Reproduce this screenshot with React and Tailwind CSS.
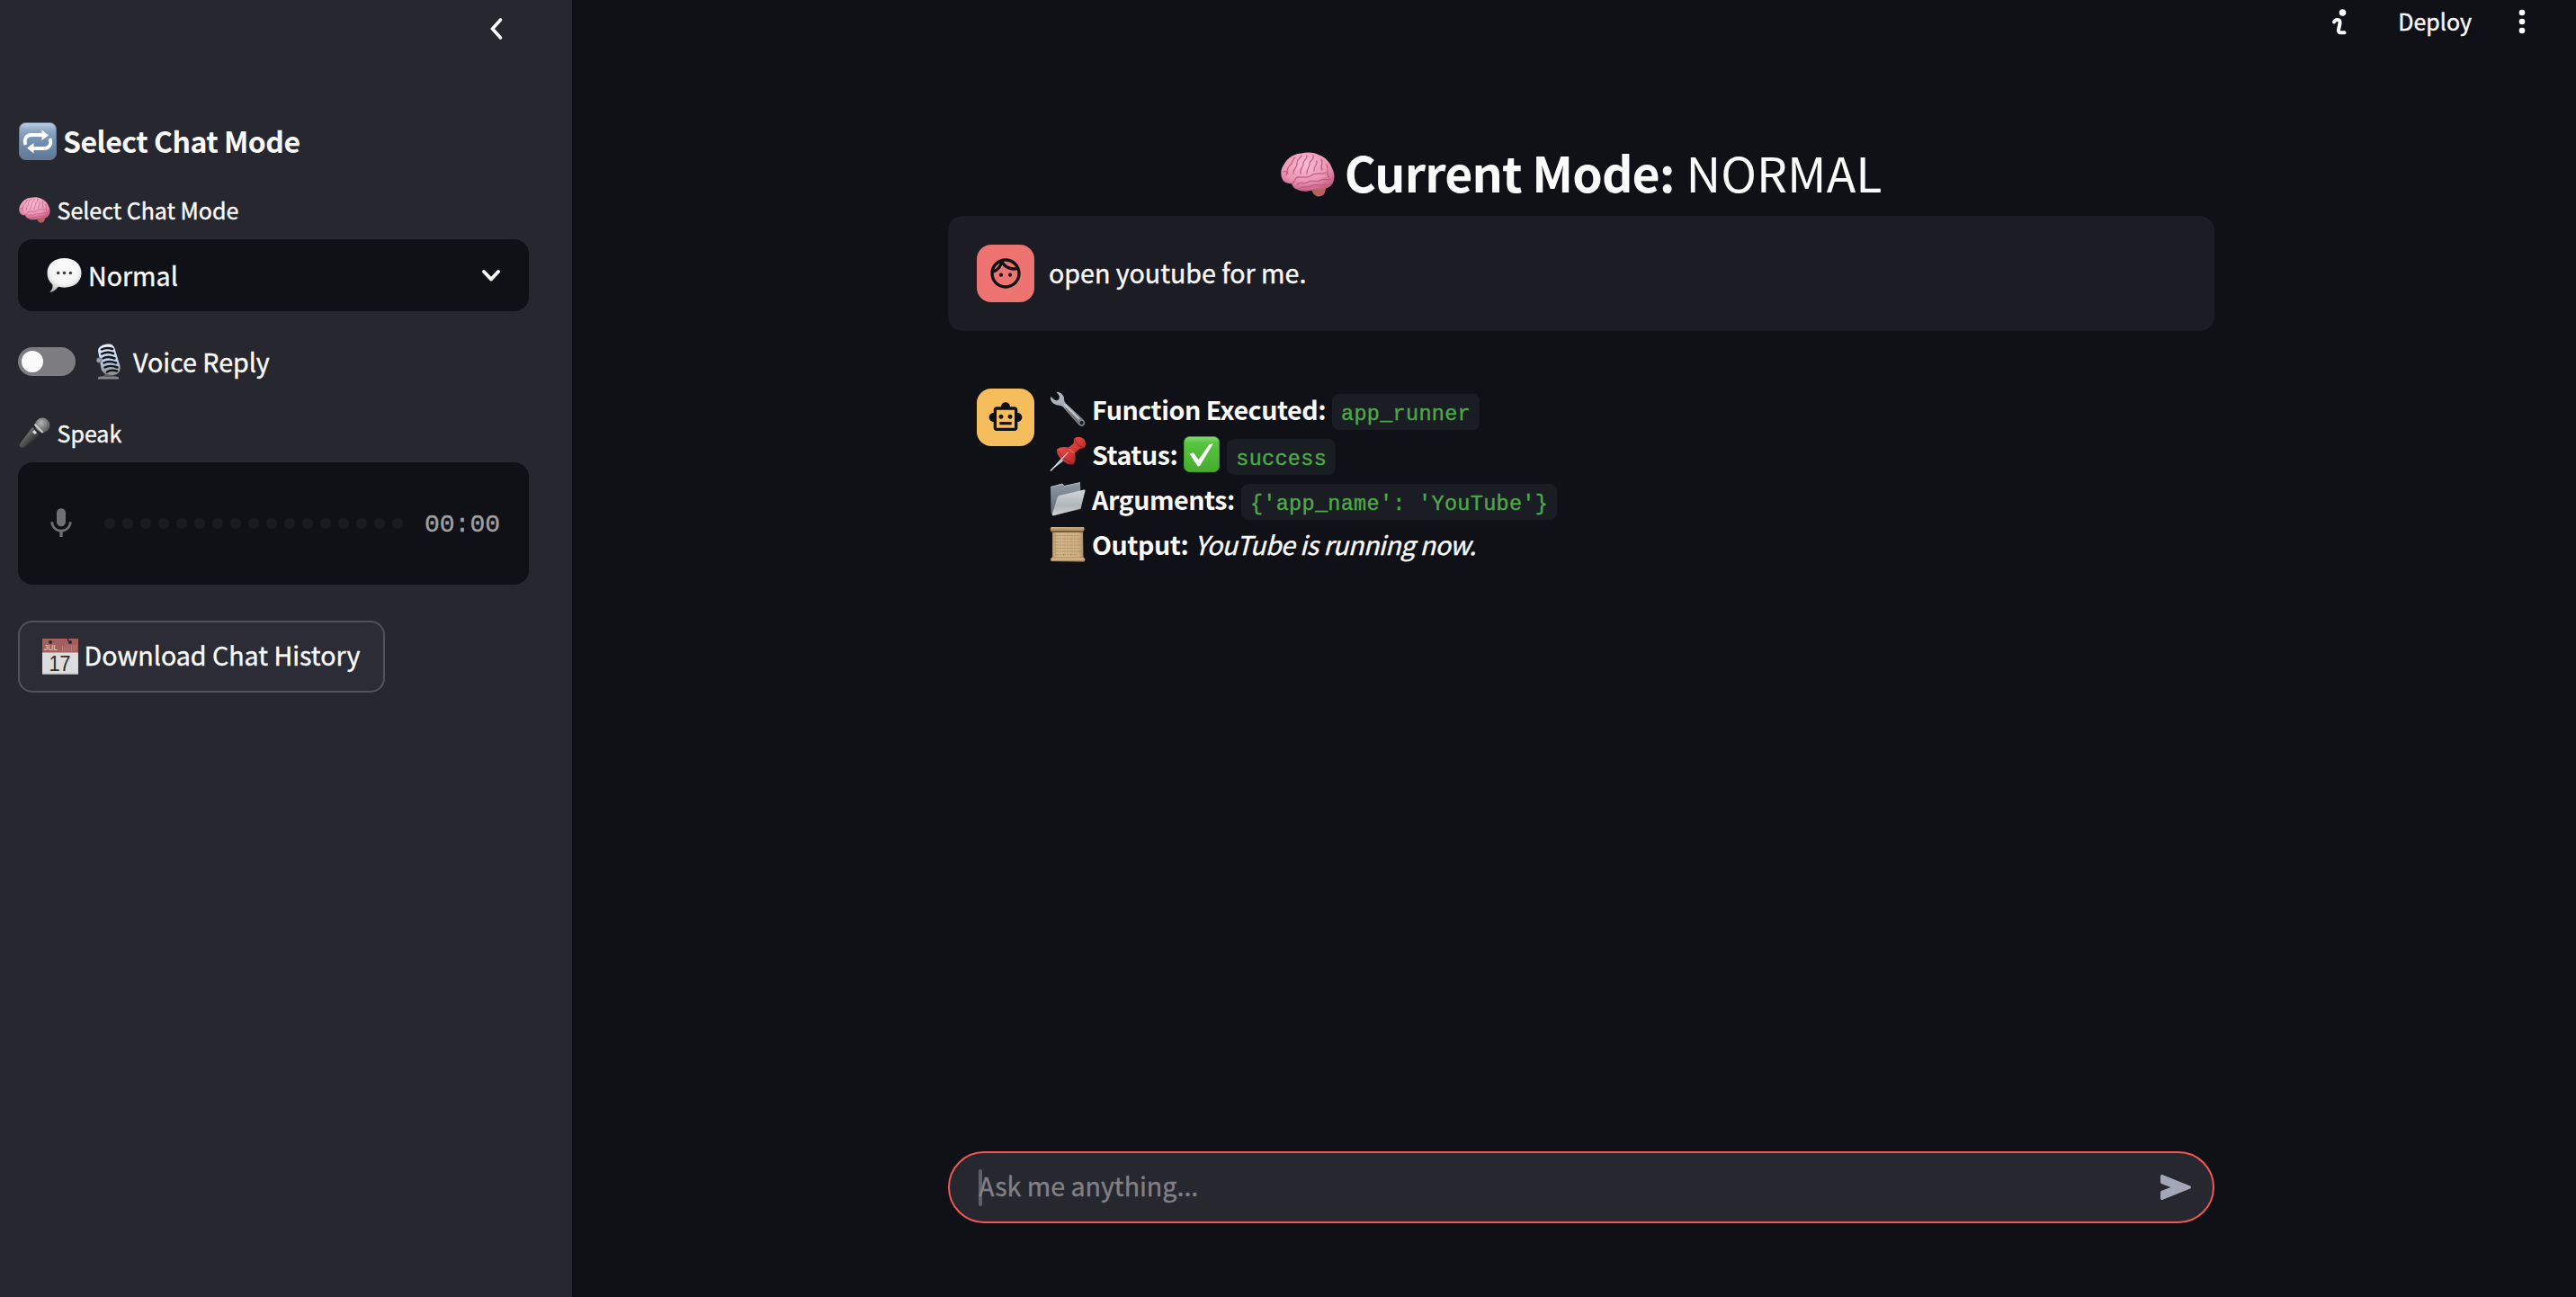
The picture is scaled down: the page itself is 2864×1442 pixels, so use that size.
import { MdOutlineFace, MdOutlineSmartToy, MdMic } from "react-icons/md";

const RepeatEmoji = ({ className }) => (
  <svg viewBox="0 0 42 42" className={className}>
    <defs>
      <linearGradient id="rep" x1="0" y1="0" x2="0" y2="1">
        <stop offset="0" stopColor="#c3d3e4" />
        <stop offset="0.2" stopColor="#8fa9c6" />
        <stop offset="0.5" stopColor="#7490b0" />
        <stop offset="1" stopColor="#5f7995" />
      </linearGradient>
    </defs>
    <rect x="0.5" y="0.5" width="41" height="41" rx="7" fill="url(#rep)" stroke="#62799a" />
    <g fill="none" stroke="#fff" strokeWidth="3.8">
      <path d="M7.500 25C5 18 9 14 14 14H27" />
      <path d="M34.500 18C37 25 33 29 28 29H15" />
    </g>
    <path d="M25.500 8.500L33 14.500L25.500 20Z M16.500 34.500L9 28.500L16.500 23Z" fill="#fff" />
  </svg>
);

const BrainEmoji = ({ className }) => (
  <svg viewBox="0 0 60 50" className={className}>
    <defs>
      <radialGradient id="brain" cx="0.45" cy="0.3" r="0.7">
        <stop offset="0" stopColor="#fbbdd2" />
        <stop offset="0.65" stopColor="#eb94b2" />
        <stop offset="1" stopColor="#c65f83" />
      </radialGradient>
    </defs>
    <path d="M33 39C35 46 38 49.500 42 49.500C47 49.500 50 46 50 39Z" fill="#b5605f" />
    <path
      d="M2 31C-1 25 0 18 4 13C8 6 15 2 23 1.500C30 -0.500 38 0.500 43 3.500C50 6 55 12 57 18C61 25 60 34 55 38C50 42 44 42 38 41C33 44 24 45 18 41.500C15 41 13 38 12 35C8 35.500 4 34 2 31Z"
      fill="url(#brain)"
    />
    <g fill="none" stroke="#b9557c" strokeWidth="1.300" strokeLinecap="round" opacity="0.85">
      <path d="M12 35C17 34 14 29 19 28C25 27 29 30 34 26C38 22 44 26 50 23" />
      <path d="M6 26C8 21 6 17 11 14C14 11 13 8 16 6" />
      <path d="M14 24C13 19 19 17 18 12C18 8 22 7 23 4" />
      <path d="M22 24C20 19 26 17 25 12C26 8 30 8 29 4" />
      <path d="M29 24C28 19 33 17 32 12C33 9 37 9 36 4" />
      <path d="M37 21C36 16 41 15 40 10M46 20C43 16 48 12 45 8" />
      <path d="M53 28C50 24 54 20 51 14" />
      <path d="M18 36C22 32 26 37 31 33C36 30 40 35 45 31C48 29 51 32 55 30" />
      <path d="M22 40C27 37 31 41 35 37C40 35 44 39 50 36" />
      <path d="M3 22C5 21 7 22 8 24" />
    </g>
  </svg>
);

const SpeechEmoji = ({ className }) => (
  <svg viewBox="0 0 40 40" className={className}>
    <defs>
      <radialGradient id="speech" cx="0.5" cy="0.35" r="0.65">
        <stop offset="0" stopColor="#ffffff" />
        <stop offset="0.65" stopColor="#f4f4f4" />
        <stop offset="1" stopColor="#bdbdbd" />
      </radialGradient>
    </defs>
    <path
      d="M20 0.500C31 0.500 39.500 7 39.500 17.500C39.500 28 31 34 20 34C17.500 34 15 33.800 13 33.200C11 36.500 7.500 38.800 4.500 39.300C3.800 39.400 3.800 38.800 4.300 38.300C6.200 36.300 7 33.500 6.500 30.500C2.500 27.500 0.500 23 0.500 17.500C0.500 7 9 0.500 20 0.500Z"
      fill="url(#speech)"
    />
    <g fill="#3c3c3c">
      <circle cx="13" cy="17.500" r="1.800" />
      <circle cx="20" cy="17.500" r="1.800" />
      <circle cx="27" cy="17.500" r="1.800" />
    </g>
  </svg>
);

const StudioMicEmoji = ({ className }) => (
  <svg viewBox="0 0 28 40" className={className}>
    <defs>
      <linearGradient id="studio" x1="0" y1="0" x2="0" y2="1">
        <stop offset="0" stopColor="#e8f0fb" />
        <stop offset="0.55" stopColor="#b9cdf0" />
        <stop offset="1" stopColor="#8f8c88" />
      </linearGradient>
    </defs>
    <path d="M2 37.500C6 35.500 20 35.500 25 37.500V39.500H2Z" fill="#85878b" />
    <path d="M10 32H19L20 37H8Z" fill="#55575c" />
    <path d="M2 8C2 3 8 0.500 14 0.500C18 0.500 20 3 21 7L26.500 25C27.500 31 24 35 18 35C12 35 6.500 33 5.500 28Z" fill="url(#studio)" />
    <g stroke="#14161a" strokeWidth="2.500" strokeLinecap="round" fill="none">
      <path d="M6 6.500C10 4.500 14 4.500 18 6" />
      <path d="M6 11.500C10 9.500 15 9.500 19 11" />
      <path d="M7.500 16.500C11 14.500 16 14.500 20.500 16.500" />
      <path d="M8.500 21.500C12 19.500 17 19.500 22 21.500" />
      <path d="M9.500 26.500C13 24.500 19 24.500 23.500 26.500" />
      <path d="M12 31.500C15 29.500 19 29.500 23 30.500" />
    </g>
    <circle cx="3" cy="18.500" r="2.800" fill="#9da3ab" stroke="#55585d" strokeWidth="0.800" />
  </svg>
);

const MicEmoji = ({ className }) => (
  <svg viewBox="0 0 36 36" className={className}>
    <defs>
      <linearGradient id="mic" x1="0" y1="0" x2="1" y2="1">
        <stop offset="0.2" stopColor="#8a8a8a" />
        <stop offset="0.5" stopColor="#4f4f50" />
        <stop offset="0.8" stopColor="#1f1f20" />
      </linearGradient>
      <radialGradient id="micHead" cx="0.4" cy="0.35" r="0.7">
        <stop offset="0" stopColor="#b4b4b4" />
        <stop offset="1" stopColor="#515151" />
      </radialGradient>
    </defs>
    <path d="M15.500 11L24 20.500L5.500 34.500C3.500 36 0 33.500 1 30.500Z" fill="url(#mic)" />
    <circle cx="27" cy="9" r="8.500" fill="url(#micHead)" />
    <path d="M18 8L27.500 17.500" stroke="#cfcfcf" strokeWidth="2" />
    <path d="M16.500 15.500L19.500 18.500" stroke="#dadada" strokeWidth="3.200" />
  </svg>
);

const CalendarEmoji = ({ className }) => (
  <svg viewBox="0 0 40 40" className={className}>
    <rect width="40" height="40" fill="#dcdcdc" />
    <rect width="40" height="15.500" fill="#a55e5e" />
    <path d="M0 38.800H40V40H0Z" fill="#a9a9a9" />
    <g fill="#2a2b31">
      <circle cx="9" cy="4" r="2.100" />
      <circle cx="31" cy="4" r="2.100" />
      <rect x="28" width="1.500" height="3" />
    </g>
    <g stroke="#b98080" strokeWidth="0.900">
      <path d="M22.500 8V14M25 8V14M27.500 7V14M30 8V14M32.500 7V14M35 7V14M37.500 7V12" />
    </g>
    <text x="2" y="13.400" fontSize="9" fontFamily="Liberation Sans, sans-serif" fill="#ead9d9" stroke="none" textLength="15" lengthAdjust="spacingAndGlyphs">JUL</text>
    <text x="7.500" y="36" fontSize="24.500" fontFamily="Liberation Sans, sans-serif" fill="#2d2d2d" textLength="24" lengthAdjust="spacingAndGlyphs">17</text>
  </svg>
);

const WrenchEmoji = ({ className }) => (
  <svg viewBox="0 0 40 40" className={className}>
    <defs>
      <linearGradient id="wrench" x1="0" y1="0" x2="1" y2="1">
        <stop offset="0" stopColor="#b7bcc6" />
        <stop offset="0.5" stopColor="#a0a6b2" />
        <stop offset="1" stopColor="#6d727c" />
      </linearGradient>
    </defs>
    <path
      d="M7.500 0.800C11 0.500 14.500 3 15.800 6.500C16.300 9 15.800 11 17.500 13L37.500 31.500C40 34 39.800 37 37.500 38.500C35.500 39.500 33.500 38.800 32 37L14.500 17C12.500 15.500 9.500 16 7 15C3 13.500 0.500 10 1 6C3 7 5 10.500 8.500 10.300C10.500 9.500 11 7.500 10.800 5.500C10 3.500 8.500 2.500 7.500 0.800Z"
      fill="url(#wrench)"
    />
    <path d="M16.500 14.500L33 31" stroke="#d2d6dd" strokeWidth="1.100" />
    <path d="M17.500 18.500L32 34.500" stroke="#5e3d42" strokeWidth="0.900" />
    <circle cx="35.500" cy="35" r="1.900" fill="#15161a" />
  </svg>
);

const PinEmoji = ({ className }) => (
  <svg viewBox="0 0 40 40" className={className}>
    <defs>
      <linearGradient id="pin" x1="0" y1="0" x2="1" y2="1">
        <stop offset="0" stopColor="#f0605a" />
        <stop offset="0.55" stopColor="#cf3733" />
        <stop offset="1" stopColor="#8e1c1e" />
      </linearGradient>
    </defs>
    <path d="M0.500 39L16 21.500L19 24.500Z" fill="#a9bdd3" />
    <path d="M27 3C30 -0.500 35 0.500 38 3C40.500 6 40.500 10 38.500 13C36 13.500 34 13.500 32 15L28 19C29 24 29 28 26 31.500C21 32 17 29.500 13.500 26C10.500 23 7.500 19 8 14.500C11.500 11.500 17 11.500 21 12.500L26 8.500C27.500 7 26.500 4.500 27 3Z" fill="url(#pin)" />
    <path d="M28 3C29 8 33 12 38 12.500M9 15.500C12 21 19 28 26 31" stroke="#8f2023" strokeWidth="1" fill="none" />
    <path d="M21.500 14C23 16 25 17.500 27 18" stroke="#f48a84" strokeWidth="1" fill="none" />
    <path d="M1 38.500L17 21.500" stroke="#d4e2f0" strokeWidth="1.200" />
    <path d="M17 21.500L21 17.500" stroke="#e9a0a0" strokeWidth="1.200" />
  </svg>
);

const CheckEmoji = ({ className }) => (
  <svg viewBox="0 0 40 40" className={className}>
    <defs>
      <linearGradient id="check" x1="0" y1="0" x2="0" y2="1">
        <stop offset="0" stopColor="#8ad976" />
        <stop offset="0.18" stopColor="#57c43f" />
        <stop offset="1" stopColor="#48ab2e" />
      </linearGradient>
    </defs>
    <rect x="0.500" y="0.500" width="39" height="39" rx="6" fill="url(#check)" stroke="#3f9a2a" />
    <path d="M6.500 19.500L11 18.500L16.500 26L28.500 9L33 8L18 33L15.800 33.500Z" fill="#fff" />
  </svg>
);

const FolderEmoji = ({ className }) => (
  <svg viewBox="0 0 40 38" className={className}>
    <defs>
      <linearGradient id="folderBack" x1="0" y1="0" x2="0" y2="1">
        <stop offset="0" stopColor="#8d99a6" />
        <stop offset="1" stopColor="#5c6772" />
      </linearGradient>
      <linearGradient id="folderFront" x1="0" y1="0" x2="0" y2="1">
        <stop offset="0" stopColor="#d3d7db" />
        <stop offset="0.6" stopColor="#b0b5ba" />
        <stop offset="1" stopColor="#cfd2d5" />
      </linearGradient>
    </defs>
    <path d="M1 5.500L14 2L16 4.500L34 0.500L35 30L3.500 37L1.500 34Z" fill="url(#folderBack)" />
    <path d="M1 5.500L14 2L16 4.500L34 0.500" stroke="#c1cad3" strokeWidth="0.900" fill="none" />
    <path d="M8.500 17.500C9 16 10 15.200 11.500 14.800L38 8.500C39 8.300 39.700 8.800 39.500 9.800L35 27.500C34.700 29 34 29.500 33 29.800L4.500 37.300C3 37.500 2.500 36.700 3 35Z" fill="url(#folderFront)" />
  </svg>
);

const ScrollEmoji = ({ className }) => (
  <svg viewBox="0 0 40 40" className={className}>
    <defs>
      <linearGradient id="scroll" x1="0" y1="0" x2="1" y2="0">
        <stop offset="0" stopColor="#b39468" />
        <stop offset="0.15" stopColor="#d2b48a" />
        <stop offset="0.85" stopColor="#cdae82" />
        <stop offset="1" stopColor="#ad8c62" />
      </linearGradient>
    </defs>
    <path d="M3 5H37L37.500 36H3Z" fill="url(#scroll)" />
    <path d="M1.500 1L38.500 1.500V4L37.500 5.500L2 6.500C0.500 5 0.500 2 1.500 1Z" fill="#b99669" />
    <path d="M2 1.800H38" stroke="#dcc4a0" strokeWidth="1" />
    <path d="M2 6H37.500" stroke="#5f4527" strokeWidth="1.300" />
    <path d="M1 36L3 34.500H38L39.500 37L38.500 39.500L1.500 39Z" fill="#b99669" />
    <path d="M1.500 36.500H38.500" stroke="#dfcba8" strokeWidth="1" />
    <path d="M6 10.500H33M6 14H34M6 17.500H33M6 21H34M6 24.500H33M6 28H34M6 31.500H31" stroke="#ab8b63" strokeWidth="0.800" strokeDasharray="4 1 2 1" />
  </svg>
);

const Code = ({ children }) => (
  <code className="flex h-10 translate-y-[3px] items-center rounded-lg bg-[#1b1d24] px-[10px] pt-1.5 font-['Liberation_Mono',monospace] text-[23.5px] leading-none tracking-[0.3px] whitespace-pre text-[#4da948]">
    {children}
  </code>
);

const Line = ({ icon: Icon, label, children }) => (
  <div className="flex h-[50px] items-center">
    <Icon className="h-10 w-10" />
    <b className="ml-[7px] tracking-[-0.45px] [-webkit-text-stroke:0px]">{label}</b>
    {children}
  </div>
);

export default function App() {
  return (
    <div className="flex h-[1442px] w-[2864px] overflow-hidden bg-[#101116] font-['Noto_Sans_CJK_JP',sans-serif] text-[28.6px] leading-[50px] whitespace-nowrap text-[#fafafa] [-webkit-text-stroke:0.4px]">
      <aside className="flex w-[636px] shrink-0 flex-col bg-[#272730] pr-12 pl-5">
        <div className="flex h-[136px] justify-end pt-[19px] pr-7">
          <svg viewBox="0 0 16 26" className="h-[26px] w-4">
            <path d="M12.500 3L3.500 13L12.500 23" fill="none" stroke="#fafafa" strokeWidth="3.600" strokeLinecap="round" />
          </svg>
        </div>
        <h3 className="flex h-[42px] items-center">
          <RepeatEmoji className="ml-px h-[42px] w-[42px]" />
          <span className="-mt-0.5 ml-[7px] text-[32px] font-bold tracking-[-0.5px] [-webkit-text-stroke:0px]">Select Chat Mode</span>
        </h3>
        <label className="mt-[35px] flex h-10 items-center text-[25px]">
          <BrainEmoji className="ml-px h-[29px] w-[35px]" />
          <span className="ml-[7.5px]">Select Chat Mode</span>
        </label>
        <div className="mt-[13px] flex h-20 items-center rounded-2xl bg-[#101116] pr-[30px] pl-8">
          <SpeechEmoji className="h-10 w-[39px]" />
          <span className="-mt-px ml-[7px]">Normal</span>
          <svg viewBox="0 0 24 16" className="ml-auto h-4 w-6">
            <path d="M4 4L12 12.500L20 4" fill="none" stroke="#fafafa" strokeWidth="4" strokeLinecap="round" strokeLinejoin="round" />
          </svg>
        </div>
        <div className="mt-9 flex h-10 items-center">
          <div className="flex h-8 w-16 items-center rounded-full bg-[#7d7c81] px-1">
            <div className="h-6 w-6 rounded-full bg-[#fafafa]" />
          </div>
          <StudioMicEmoji className="ml-[23px] h-10 w-7" />
          <span className="-mt-px ml-[13px]">Voice Reply</span>
        </div>
        <label className="mt-[41px] flex h-9 items-center text-[25px]">
          <MicEmoji className="ml-px h-[35px] w-[35px]" />
          <span className="ml-[7.5px]">Speak</span>
        </label>
        <div className="mt-[15px] flex h-[136px] items-center rounded-2xl bg-[#101116] pl-7">
          <MdMic className="h-10 w-10 text-[#707074]" />
          <div className="ml-7 flex gap-2">
            {Array.from({ length: 17 }, (_, i) => (
              <span key={i} className="h-3 w-3 rounded-full bg-[#1a1b20]" />
            ))}
          </div>
          <span className="mt-1 ml-6 font-['Liberation_Mono',monospace] text-[28px] text-[#a0a0a3]">00:00</span>
        </div>
        <button className="mt-10 flex h-20 w-[408px] items-center rounded-2xl border-2 border-[#51525b] bg-[#2b2c36] pl-[25px]">
          <CalendarEmoji className="h-10 w-10" />
          <span className="-mt-1 ml-[6.500px]">Download Chat History</span>
        </button>
      </aside>
      <main className="flex flex-1 flex-col items-center">
        <header className="flex h-12 w-full items-center justify-end pr-[54px]">
          <svg viewBox="0 0 18 32" className="h-8 w-[18px]">
            <circle cx="12.500" cy="6" r="3.800" fill="#fafafa" />
            <path d="M3 16.500C4.500 13 10.500 13 9.500 18L8 25C7.500 28.500 10 28.500 14.500 28.300" fill="none" stroke="#fafafa" strokeWidth="4" strokeLinecap="round" />
          </svg>
          <span className="-mt-0.5 ml-14 text-[25px]">Deploy</span>
          <svg viewBox="0 0 12 28" className="ml-[50px] h-7 w-3" fill="#fafafa">
            <circle cx="6" cy="4" r="3.300" />
            <circle cx="6" cy="14" r="3.300" />
            <circle cx="6" cy="24" r="3.300" />
          </svg>
        </header>
        <section className="ml-4 flex w-[1408px] flex-1 flex-col">
          <h1 className="mt-[110px] flex h-[66px] items-center justify-center text-[53.600px] [-webkit-text-stroke:0px]">
            <BrainEmoji className="mt-[5px] h-[50px] w-[60px]" />
            <span className="ml-[11px] font-bold tracking-[-0.8px]">Current Mode:</span>
            <span className="ml-[13px]">NORMAL</span>
          </h1>
          <div className="mt-4 flex h-32 items-center rounded-2xl bg-[#1b1c24] pl-8">
            <div className="flex h-16 w-16 items-center justify-center rounded-2xl bg-[#ed7470]">
              <MdOutlineFace className="h-10 w-10 text-[#101116]" />
            </div>
            <p className="-mt-[3px] ml-4">open youtube for me.</p>
          </div>
          <div className="mt-[62px] flex pl-8">
            <div className="mt-0.5 flex h-16 w-16 items-center justify-center rounded-2xl bg-[#f5bd5b]">
              <MdOutlineSmartToy className="h-10 w-10 text-[#101116]" />
            </div>
            <div className="ml-[17px]">
              <Line icon={WrenchEmoji} label="Function Executed:">
                <span className="ml-[7px]"><Code>app_runner</Code></span>
              </Line>
              <Line icon={PinEmoji} label="Status:">
                <CheckEmoji className="ml-[7px] h-10 w-10" />
                <span className="ml-2"><Code>success</Code></span>
              </Line>
              <Line icon={FolderEmoji} label="Arguments:">
                <span className="ml-[7px]"><Code>{"{'app_name': 'YouTube'}"}</Code></span>
              </Line>
              <Line icon={ScrollEmoji} label="Output:">
                <i className="ml-[7px] tracking-[-0.5px]">YouTube is running now.</i>
              </Line>
            </div>
          </div>
          <div className="mt-auto mb-[82px] flex h-20 items-center rounded-full border-2 border-[#f35753] bg-[#272730] pr-[23px] pl-8">
            <div className="-mr-1 h-[41px] w-1 rounded-full bg-[#606166]" />
            <span className="-mt-[5px] text-[#808085]">Ask me anything...</span>
            <svg viewBox="0 0 36 32" className="ml-auto h-8 w-9">
              <path d="M2.500 3.500L33.500 16L2.500 28.500V21.500L16.500 16L2.500 10.500Z" fill="#a3a6b6" stroke="#a3a6b6" strokeWidth="3" strokeLinejoin="round" />
            </svg>
          </div>
        </section>
      </main>
    </div>
  );
}
